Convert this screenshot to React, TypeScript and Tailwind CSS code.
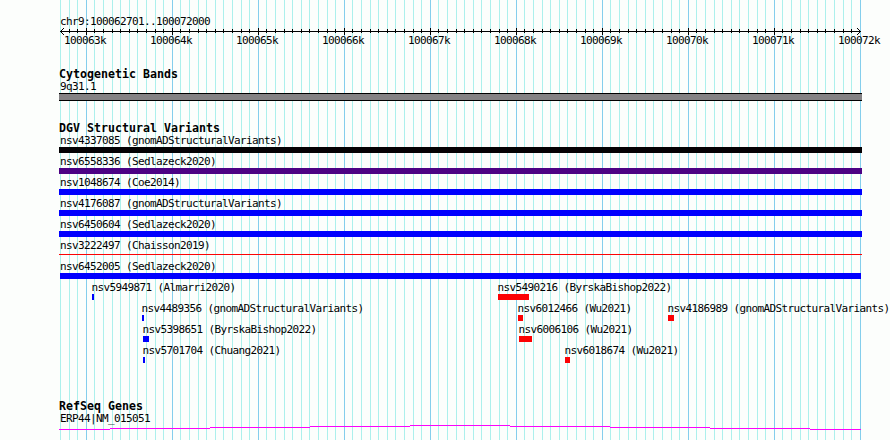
import React from "react";

type Feature = { name: string; x: number; w: number; labelX?: number; color: string; thin?: boolean };

const BLUE = "bg-[#0000fe]";
const RED = "bg-[#fc0204]";

const rows: Feature[][] = [
  [{ name: "nsv4337085 (gnomADStructuralVariants)", x: 59, w: 803, labelX: 60, color: "bg-[#040204]" }],
  [{ name: "nsv6558336 (Sedlazeck2020)", x: 59, w: 803, labelX: 60, color: "bg-[#4c0284]" }],
  [{ name: "nsv1048674 (Coe2014)", x: 59, w: 803, labelX: 60, color: BLUE }],
  [{ name: "nsv4176087 (gnomADStructuralVariants)", x: 59, w: 803, labelX: 60, color: BLUE }],
  [{ name: "nsv6450604 (Sedlazeck2020)", x: 59, w: 803, labelX: 60, color: BLUE }],
  [{ name: "nsv3222497 (Chaisson2019)", x: 59, w: 803, labelX: 60, color: RED, thin: true }],
  [{ name: "nsv6452005 (Sedlazeck2020)", x: 60, w: 801, labelX: 60, color: BLUE }],
  [
    { name: "nsv5949871 (Almarri2020)", x: 92, w: 2, color: BLUE },
    { name: "nsv5490216 (ByrskaBishop2022)", x: 498, w: 31, color: RED },
  ],
  [
    { name: "nsv4489356 (gnomADStructuralVariants)", x: 142, w: 2, color: BLUE },
    { name: "nsv6012466 (Wu2021)", x: 518, w: 5, color: RED },
    { name: "nsv4186989 (gnomADStructuralVariants)", x: 668, w: 6, color: RED },
  ],
  [
    { name: "nsv5398651 (ByrskaBishop2022)", x: 143, w: 6, color: BLUE },
    { name: "nsv6006106 (Wu2021)", x: 519, w: 13, color: RED },
  ],
  [
    { name: "nsv5701704 (Chuang2021)", x: 143, w: 2, color: BLUE },
    { name: "nsv6018674 (Wu2021)", x: 565, w: 5, color: RED },
  ],
];

const ticks = Array.from({ length: 94 }, (_, k) => ({
  x: Math.round(59.9 + (k * 800) / 93),
  major: k % 10 === 3,
}));

const kilobases = [63, 64, 65, 66, 67, 68, 69, 70, 71, 72];

const geneSteps: [number, number, number][] = [
  [59, 110, 4], [110, 210, 3], [210, 310, 2], [310, 410, 1], [410, 510, 0],
  [510, 610, 1], [610, 710, 2], [710, 810, 3], [810, 861, 4],
];

function Title({ children }: { children: React.ReactNode }) {
  return (
    <h2 className="ml-[59px] h-[13px] font-['DejaVu_Sans_Mono',monospace] text-[11.6px] leading-[13px] font-bold tracking-[0.016px] whitespace-pre">
      {children}
    </h2>
  );
}

function FeatureRow({ features }: { features: Feature[] }) {
  return (
    <div className="grid h-[21px] w-[890px] grid-cols-1 grid-rows-1">
      {features.map((f) => (
        <div key={f.name} className="col-start-1 row-start-1 h-[21px] w-0" style={{ marginLeft: f.x }}>
          <div className="h-[13px] w-0 whitespace-pre" style={{ marginLeft: (f.labelX ?? f.x - 0.6) - f.x }}>
            {f.name}
          </div>
          <div className={`${f.color} ${f.thin ? "mt-[2px] h-px" : "h-[6px]"}`} style={{ width: f.w }} />
        </div>
      ))}
    </div>
  );
}

export default function App() {
  return (
    <main className="relative h-[440px] w-[890px] overflow-hidden bg-[#fcfefc] font-['DejaVu_Sans_Mono',monospace] text-[11px] leading-[13px] tracking-[-0.622px] text-black">
      <svg className="absolute inset-0" width="890" height="440" shapeRendering="crispEdges" aria-hidden="true">
        {ticks.map((t) => (
          <rect key={t.x} x={t.x} y="0" width="1" height="440" fill={t.major ? "#84ceec" : "#acf0ec"} />
        ))}
      </svg>
      <div className="relative flex flex-col">
        <div className="mt-[15px] ml-[60px] h-[13px]">chr9:100062701..100072000</div>
        <svg className="h-[7px] w-[890px]" viewBox="0 28 890 7" shapeRendering="crispEdges">
          <rect x="60" y="31" width="801" height="1" />
          {ticks.slice(1, -1).map((t) => (
            <rect key={t.x} x={t.x} y={t.major ? 28 : 29} width="1" height={t.major ? 7 : 4} />
          ))}
          <path d="M61 30h1v1h-1zM62 29h1v1h-1zM63 28h1v1h-1zM61 32h1v1h-1zM62 33h1v1h-1zM63 34h1v1h-1zM859 30h1v1h-1zM858 29h1v1h-1zM857 28h1v1h-1zM859 32h1v1h-1zM858 33h1v1h-1zM857 34h1v1h-1z" />
        </svg>
        <div className="-mt-px ml-[64px] flex h-[13px]">
          {kilobases.map((k) => (
            <span key={k} className="w-[86px] shrink-0">{`1000${k}k`}</span>
          ))}
        </div>

        <section className="mt-[21px]">
          <Title>Cytogenetic Bands</Title>
          <div className="-mt-px ml-[60px] h-[13px]">9q31.1</div>
          <div className="ml-[59px] h-[8px] w-[803px] border-y border-black bg-[#848284]" />
        </section>

        <section className="mt-[21px]">
          <Title>DGV Structural Variants</Title>
          <div className="-mt-px">
            {rows.map((features) => (
              <FeatureRow key={features[0].name} features={features} />
            ))}
          </div>
        </section>

        <section className="mt-[35px]">
          <Title>RefSeq Genes</Title>
          <div className="-mt-px ml-[60px] h-[13px]">ERP44|NM_015051</div>
          <svg className="h-[5px] w-[890px]" viewBox="0 0 890 5" shapeRendering="crispEdges">
            {geneSteps.map(([from, to, y]) => (
              <rect key={from} x={from} y={y} width={to - from} height="1" fill="#fc02fc" />
            ))}
          </svg>
        </section>
      </div>
    </main>
  );
}
